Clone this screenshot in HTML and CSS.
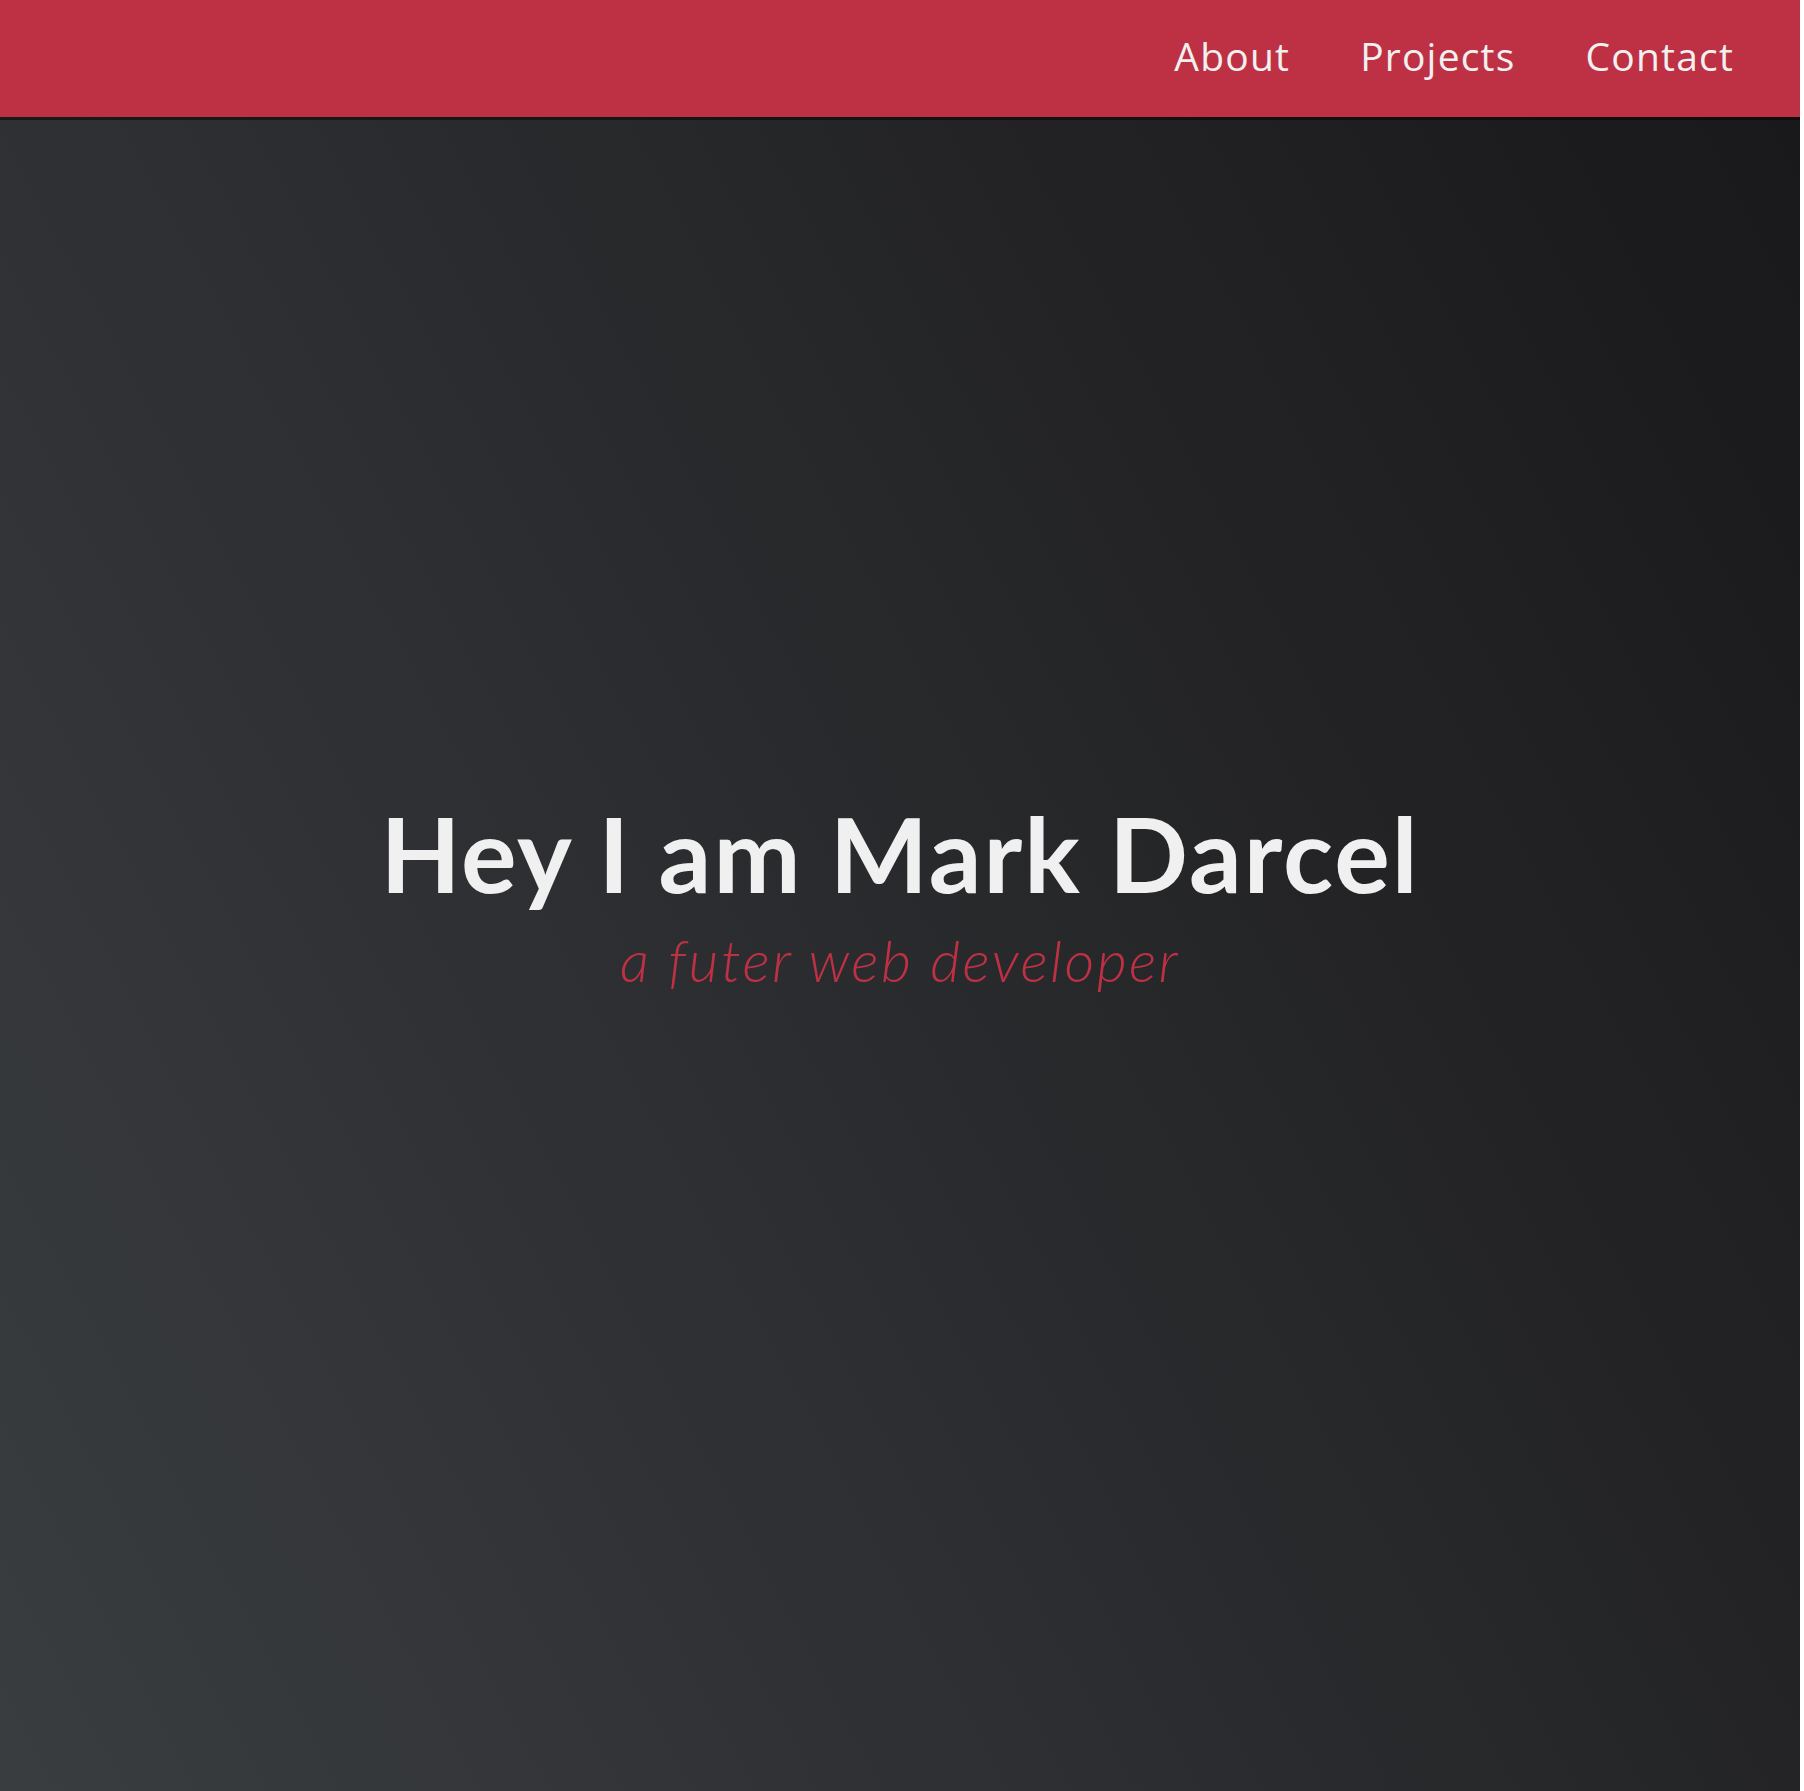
FILE: index.html
```html
<!DOCTYPE html>
<html lang="en">
<head>
<meta charset="utf-8">
<title>Mark Darcel</title>
<link rel="stylesheet" href="styles.css">
</head>
<body>
<div class="page">
  <nav class="nav">
    <ul class="nav-list">
      <li><a href="#about">About</a></li>
      <li><a href="#projects">Projects</a></li>
      <li><a href="#contact">Contact</a></li>
    </ul>
  </nav>
  <section class="welcome">
    <h1 class="welcome-title">Hey I am Mark Darcel</h1>
    <p class="welcome-sub">a futer web developer</p>
  </section>
</div>
</body>
</html>
```
FILE: styles.css
```css
html, body {
  margin: 0;
  padding: 0;
  background: #ffffff;
}
.page {
  margin-right: 4px;
  height: 1791px;
  display: flex;
  flex-direction: column;
  position: relative;
}
.nav {
  position: absolute;
  top: 0;
  left: 0;
  right: 0;
  height: 117px;
  background: #be3144;
  box-shadow: 0 3px 0 rgba(0, 0, 0, 0.45);
  z-index: 2;
  display: flex;
  justify-content: flex-end;
  align-items: center;
}
.nav-list {
  list-style: none;
  margin: 0;
  padding: 0 66px 6px 0;
  display: flex;
  gap: 70px;
}
.nav-list a {
  font-family: "Open Sans", sans-serif;
  font-size: 39px;
  letter-spacing: 1.2px;
  color: #f0f0f0;
  text-decoration: none;
}
.nav-list .wide {
  letter-spacing: 2px;
}
.welcome {
  flex: 1;
  display: flex;
  flex-direction: column;
  align-items: center;
  justify-content: center;
  background-color: #000;
  background-image: linear-gradient(62deg, #3a3d40 0%, #181719 100%);
  color: #f0f0f0;
}
.welcome-title {
  margin: 0 0 15px;
  font-family: Lato, sans-serif;
  font-weight: 700;
  font-size: 104px;
  letter-spacing: 2px;
  line-height: 1.1;
}
.welcome-sub {
  margin: 0;
  font-family: Lato, sans-serif;
  font-style: italic;
  font-weight: 300;
  font-size: 58px;
  letter-spacing: 2.4px;
  color: #be3144;
  line-height: 1.2;
}
```
